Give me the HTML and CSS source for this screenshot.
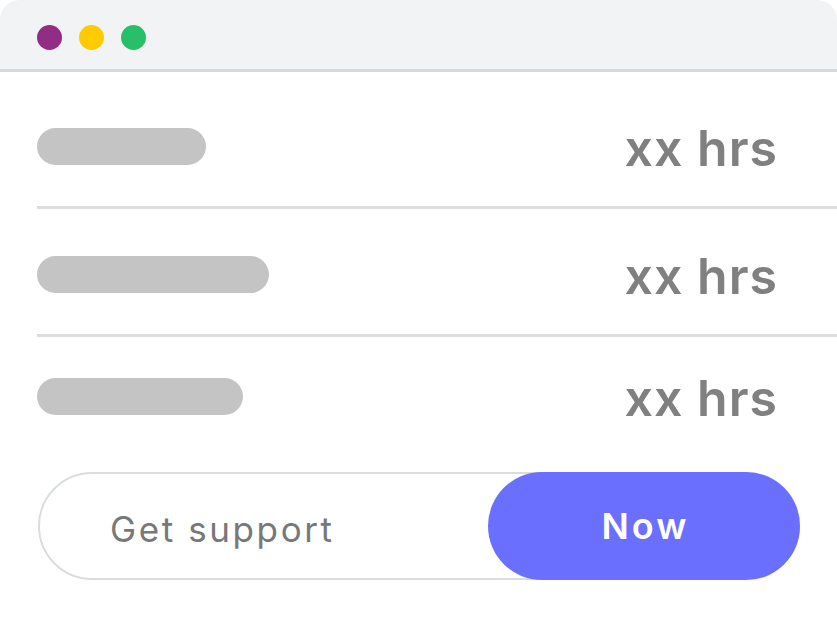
FILE: index.html
```html
<!DOCTYPE html>
<html lang="en">
<head>
<meta charset="utf-8">
<title>Support hours</title>
<link rel="stylesheet" href="styles.css">
</head>
<body>
<div class="window">
  <div class="titlebar">
    <span class="dot dot-purple"></span>
    <span class="dot dot-yellow"></span>
    <span class="dot dot-green"></span>
  </div>
  <div class="rows">
    <div class="row row-1">
      <span class="pill pill-1"></span>
      <span class="hrs">xx hrs</span>
    </div>
    <div class="row row-2">
      <span class="pill pill-2"></span>
      <span class="hrs">xx hrs</span>
    </div>
    <div class="row row-3">
      <span class="pill pill-3"></span>
      <span class="hrs">xx hrs</span>
    </div>
  </div>
  <div class="cta">
    <span class="cta-label">Get support</span>
    <button class="now">Now</button>
  </div>
</div>
</body>
</html>
```
FILE: styles.css
```css
html, body {
  margin: 0;
  padding: 0;
  background: #ffffff;
}

body {
  font-family: Inter, "Open Sans", sans-serif;
}

.window {
  width: 837px;
  height: 625px;
  background: #ffffff;
  border-radius: 20px 20px 0 0;
  overflow: hidden;
}

.titlebar {
  height: 69px;
  background: #f1f3f4;
  border-bottom: 3px solid #d7dadc;
  display: flex;
  align-items: center;
  gap: 17px;
  padding-left: 37px;
  box-sizing: content-box;
}

.dot {
  width: 25px;
  height: 25px;
  border-radius: 50%;
  display: block;
  margin-top: 6px;
}

.dot-purple { background: #922d86; }
.dot-yellow { background: #fecb00; }
.dot-green { background: #28bf6b; }

.rows {
  margin-left: 37px;
}

.row {
  display: flex;
  align-items: flex-start;
  justify-content: space-between;
  padding-right: 59px;
  padding-bottom: 41px;
  border-bottom: 3px solid #dcdedf;
}

.row-1 { padding-top: 56px; }
.row-2 { padding-top: 47px; }
.row-3 { padding-top: 41px; border-bottom: none; }

.pill {
  display: block;
  height: 37px;
  border-radius: 19px;
  background: #c4c4c4;
}

.pill-1 { width: 169px; }
.pill-2 { width: 232px; }
.pill-3 { width: 206px; }

.hrs {
  font-size: 50px;
  font-weight: 600;
  color: #808080;
  line-height: 37px;
  letter-spacing: 1px;
  position: relative;
  top: 2px;
}

.cta {
  margin: 16px 37px 0 38px;
  height: 104px;
  border: 2px solid #dadddf;
  border-radius: 56px;
  display: flex;
  align-items: center;
}

.cta-label {
  padding-left: 70px;
  padding-top: 6px;
  font-size: 35px;
  letter-spacing: 2.6px;
  color: #787878;
  flex: 1;
}

.now {
  align-self: stretch;
  margin: -2px -2px -2px 0;
  width: 312px;
  border: none;
  border-radius: 56px;
  background: #6b6ffe;
  color: #ffffff;
  font-family: inherit;
  font-size: 36px;
  font-weight: 600;
  letter-spacing: 3px;
  padding: 0 0 0 3px;
}
```
